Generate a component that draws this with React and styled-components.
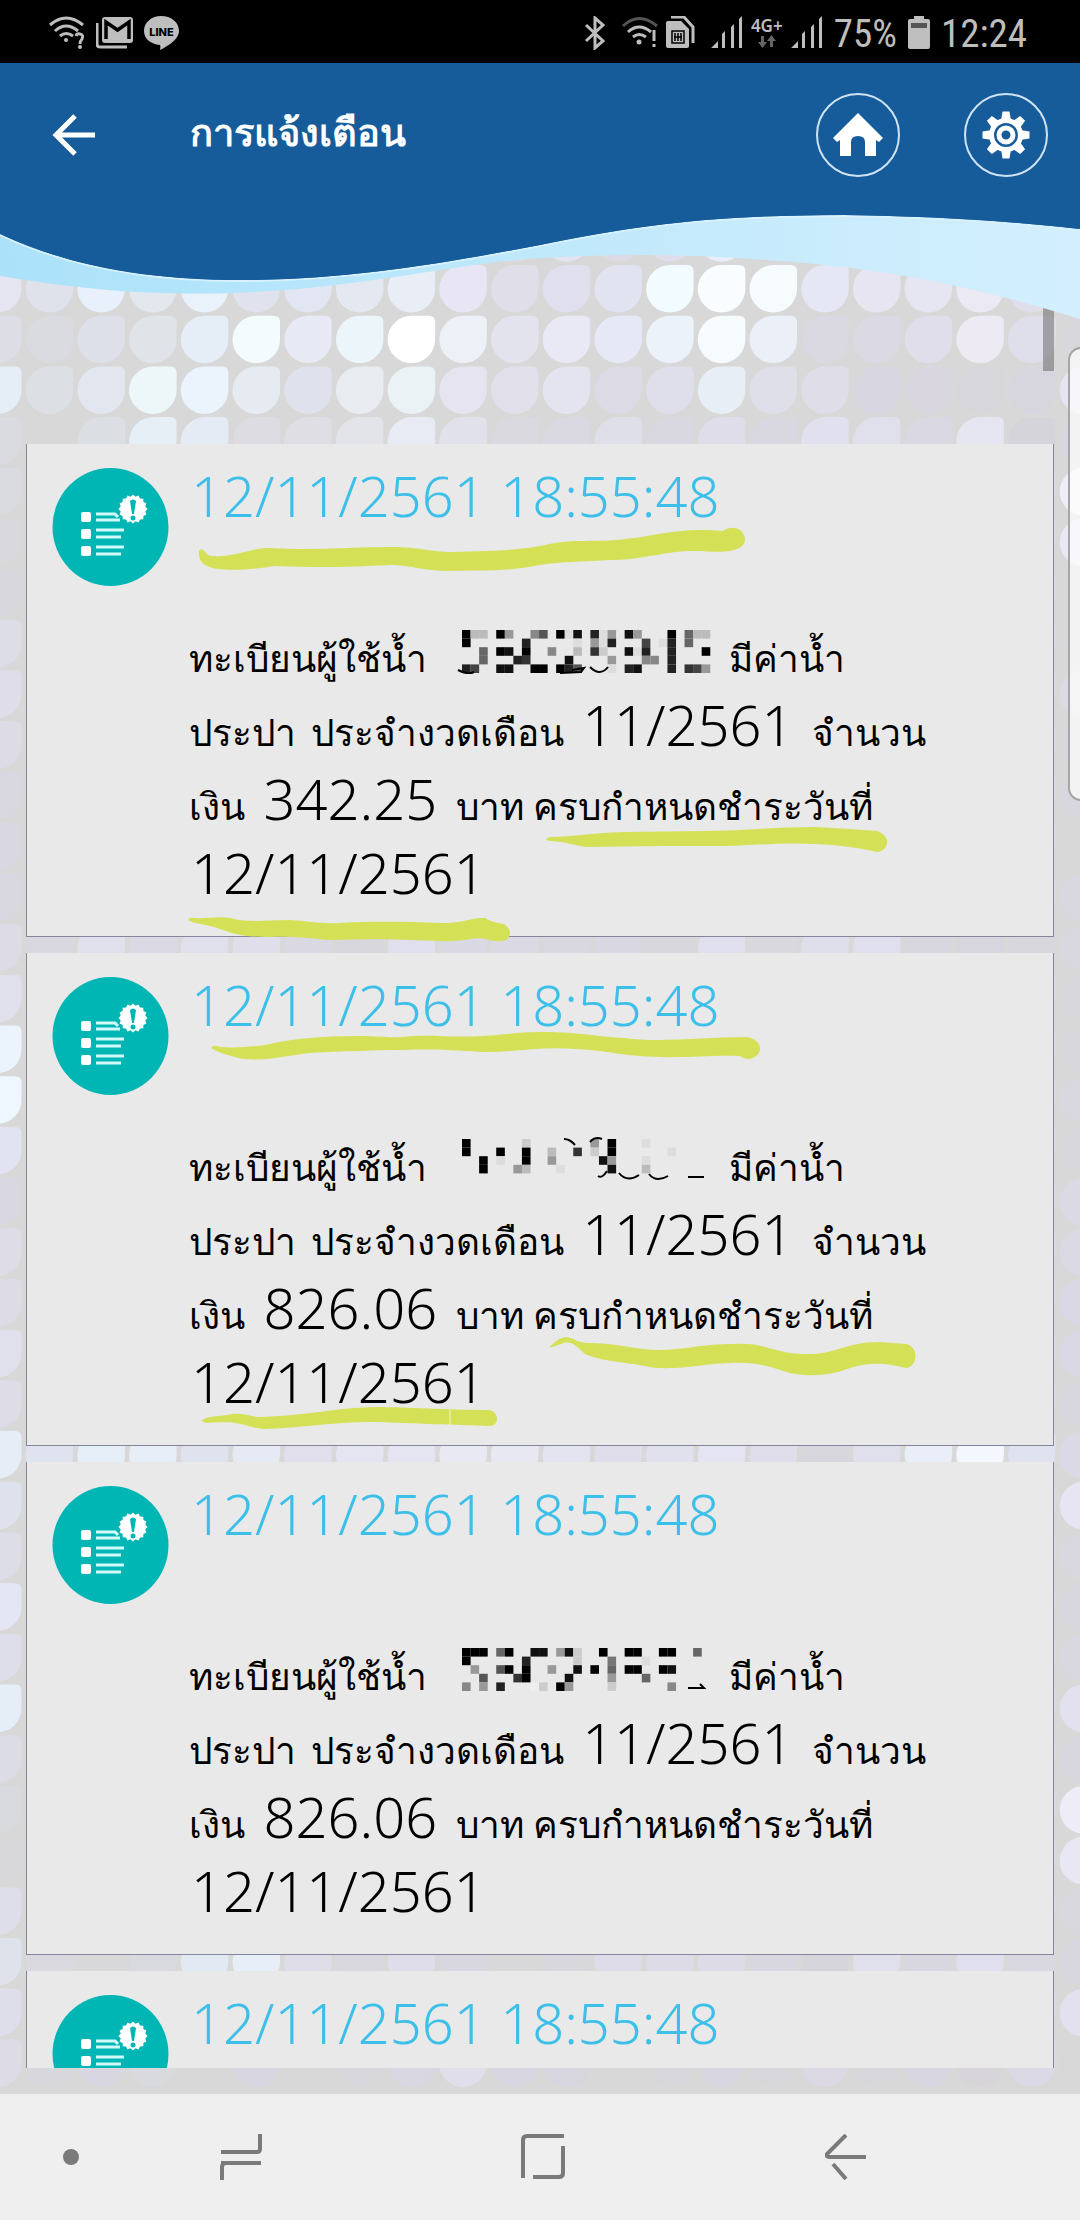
import React from "react";
import styled, { createGlobalStyle } from "styled-components";

const notifications = [
  {
    date: "12/11/2561 18:55:48",
    amount: "342.25",
    top: 444,
    mosaic: [
      "0bb.09..85.0d1.2d9.19...0.6bb",
      "0......2.....d.9d2...4.d2.6..",
      "..6.01.0..8..b.3c..1d2..2...0",
      "..6...23....1....9...88.2....",
      "24..11..00.025...d.21...2.349",
    ],
    strokes: ["M-4 40Q6 45 12 42", "M98 43L119 42L122 38L110 40", "M128 37Q138 47 146 37"],
    marks: [
      "M199 551Q202 547 205 552C208 557 216 557 230 555C245 553 252 548 270 548C310 551 350 547 392 547C420 547 430 552 452 552C500 551 520 550 545 545C575 538 595 543 625 539C655 537 675 527 723 531C733 524 745 529 745 540C744 552 722 553 700 551C665 550 650 559 612 560C570 562 560 562 540 565C505 572 480 570 445 571C420 570 410 565 390 565C350 567 320 568 275 566C250 570 220 572 207 566Q198 562 199 551Z",
      "M546 840Q548 836 556 837C575 836 595 833 624 832L705 831C740 831 775 827 815 827C840 828 860 830 877 831C892 836 889 851 877 852C860 848 840 845 815 844C780 842 750 846 726 846L664 846L587 847C572 845 562 841 550 841Z",
      "M188 920Q189 917 194 918C207 919 218 916 231 918C240 922 262 921 289 920C310 921 320 924 340 923C380 921 410 922 441 923C465 923 473 917 485 918C494 923 499 923 504 924C513 929 511 940 503 941C492 942 485 938 479 938C465 939 460 942 440 941L379 939L327 940C310 938 290 936 270 937C240 937 232 933 217 928C207 924 194 924 188 920Z",
    ],
  },
  {
    date: "12/11/2561 18:55:48",
    amount: "826.06",
    top: 953,
    mosaic: [
      "0......c.......9.0...d.......",
      "0...0..0..b..3.c.0......d....",
      "..0.d..0..9.....19...d.......",
      "..0...9b...d.....1...b.......",
      ".............................",
    ],
    strokes: ["M102 0Q108 0 113 6", "M128 3Q133 -3 140 0", "M136 37Q140 40 145 32", "M157 34Q165 44 177 36", "M187 35Q194 44 206 37", "M226 38H242"],
    marks: [
      "M211 1048Q213 1044 220 1047C235 1048 250 1047 265 1045C290 1039 320 1036 361 1036C380 1036 390 1038 403 1037C430 1034 450 1038 482 1036C510 1034 520 1032 542 1032C580 1032 600 1037 624 1038C660 1043 705 1037 746 1037C764 1039 764 1056 750 1059Q743 1059 740 1056C710 1055 690 1058 660 1057C620 1056 605 1050 575 1049C540 1046 510 1053 481 1052C450 1050 430 1049 403 1050C370 1050 330 1052 310 1053C290 1055 270 1061 244 1059C235 1057 218 1053 211 1048Z",
      "M549 1348C554 1342 559 1338 566 1337C575 1338 576 1343 590 1343C625 1344 635 1350 661 1350C690 1349 700 1344 735 1344C765 1342 775 1354 806 1354C835 1355 845 1342 880 1342L906 1344C919 1346 918 1367 906 1368C885 1363 870 1362 850 1368C830 1376 810 1377 790 1373C770 1367 760 1362 730 1363C700 1364 690 1369 656 1368C625 1362 600 1361 585 1354C576 1346 572 1341 564 1343Z",
      "M201 1421C207 1415 220 1417 232 1414C245 1413 250 1417 262 1417C310 1415 335 1408 375 1407C410 1407 440 1410 489 1410C500 1412 499 1426 490 1426C460 1425 430 1424 375 1422C330 1422 300 1428 265 1429C245 1428 245 1420 207 1423Z",
    ],
    gap: "M450 1410V1426",
  },
  {
    date: "12/11/2561 18:55:48",
    amount: "826.06",
    top: 1462,
    mosaic: [
      "000.60..11.91c..0..00..00..6.",
      "0......2.....c...7...d.......",
      ".9..50.0..9..1.0.6.00..01....",
      "..5...30....1....9...6.......",
      "8.9.2...ec.09....c......8....",
    ],
    strokes: ["M226 40H242L238 36"],
    marks: [],
  },
  {
    date: "12/11/2561 18:55:48",
    top: 1971,
    marks: [],
  },
];

const gray = (c) => `#${c}${c}${c}`;

// one colour per drop, left to right
const dropRows = {
  "-2": "e0e0e8 e0e0e8 e0e0e8 e0e0e8 e0e0e8 e0e0e8 e0e0e8 e0e0e8 e0e0e8 e0e0e8 dddce8 e4e3f1 dddae5 dfdde9 eaeef8 d8d8dd dad9df d8d8dd d8d8dd d8d8dd d8d8dd d8d8dd",
  "-1": "e4e5f1 dfe2ea e7f0fb e2e8ed e9f1fb e0e2ed e2e6f3 e4e8f0 e9edf6 e8e6f4 e0dee9 e0dfed e1e3f1 f2fbff fafdff f6fcfe e5e7f4 e7e5f1 e6e6f2 ebe9f3 e0deea d8d7db",
  0: "dddde6 d9dbe0 dde0e9 e0e3e8 e5edf6 f3fbfe e7eaf4 ecf5f9 ffffff edf0f6 e3e3ee e8e9f4 e6e9f5 ecf2fa f5fbff ebf0f8 dad9e1 dbdae4 dfdeea edeaf4 dfdeeb d8d7db",
  1: "e5edf7 dce0e5 e2e6ee edf7fa ebf3fc e6ebf2 dfe2ec e8ebf0 ebf2f5 e6e4f1 e0dfea e4e4f0 dcdae5 dfdfeb e8eef6 dfdfe9 dfdde8 d8d6e0 d9d6df d6d6db d7d6df e5e5f2",
  2: "d9dbe1 d8d8d8 dbdfe4 e6eef6 e5ebf5 dcdce2 dedee4 e3e4ea e8ebf4 e1e1eb d9d9df dad9e1 dedfe9 d9d8e0 dfddea d9d8e0 e0e0ee e0dfec dad9e3 e6e6f3 d6d4db d8d6e0",
  12: "dddce6 d9d8e0 e0dfec dad9e4 e0dfec dfdeea dad8e2 d7d6dc e0dfee dad9e3 dbdae4 d9d7df d9d8e2 d8d7de e0dfed d9d8df dfdeeb e0dfee d8d7df d7d6df d8d6dd d9d8e1",
  22: "e6edf7 dfe3ef e6eef7 e7eef7 dfe3ee e6eaf4 e1dfeb e5e5f1 e5e5f2 e9e9f4 e8e8f3 e4e4f1 e0deea e1e0ed e4e4f2 dfdeea d7d6dd e0dfec eaeef8 f4f8fe e0e2ef dcd8e6",
  32: "dfe1eb d9d9df d8d8db d9dade e2e9f2 e8eef8 dedde8 d8d8de dfdde9 d8d6df d8d8da d7d7dc dfdce9 dddce6 dcdbe6 d8d7df d7d5dc e0dfec d8d7e0 e0dfee d9d7e0 d8d7df",
  34: "dddbe6 d8d7db d8d6e0 d9dade d8d8d8 d8d7e1 d8d8d9 d8d7dc d9d7e2 e1deeb d8d6e1 d7d5dd d8d8d9 d7d7db d8d6e1 d7d6db dcd9e5 d7d6da d8d6e0 d7d5da dbd9e5 d7d7d9",
};
// outer columns beside the cards, from row 3 down
const leftEdge = "d9dbe0 d8d8dd d8d7de dddde8 dedde9 dcdbe6 d9d8e1 d9d8e2 d9d8e1 d9d8e0 e0e0ec ebf3fd eef6ff e2e3f0 d9d8e2 dddce7 dcdbe6 e0e0ec dddce7 e6edf7 dfe2ed dcdde7 e4e7f3 dddeea e5edf7 dbdce5 d9dade d8d8da dddeea dfe1eb dddeea".split(" ");
const rightEdge = "f0edf8 e8e7f3 d8d8da d8d8da dcdbe5 d8d7dd d8d7df d8d8da d9d8e1 d8d7df d8d7dc d8d7dc d9d8e0 d8d7dc dad9e4 dad9e4 d9d8e4 dad8e4 d8d7df dad8e4 e6e5f3 d9d8e0 d8d7df d9d8e0 e2e1ef d8d7df efecf7 e8e7f4 d9d8df d8d7df e3e1ef".split(" ");

const drops = [];
for (let row = -2; row <= 34; row++) {
  const known = dropRows[row] && dropRows[row].split(" ");
  for (let col = 0; col < 22; col++) {
    let fill = "#d9d9df";
    if (known) fill = `#${known[col]}`;
    else if (col === 0) fill = `#${leftEdge[row - 3]}`;
    else if (col === 21) fill = `#${rightEdge[row - 3]}`;
    drops.push({ x: -26 + col * 51.7, y: 315.7 + row * 50.7, fill });
  }
}

function Backdrop() {
  return (
    <BackdropSvg viewBox="0 0 1080 2094" preserveAspectRatio="xMidYMin slice" aria-hidden="true">
      {drops.map((d, i) => (
        <path
          key={i}
          transform={`translate(${d.x} ${d.y})`}
          d="M24 0H41Q47.500 0 47.500 6V24A23.700 23.500 0 0 1 0 24A24 24 0 0 1 24 0Z"
          fill={d.fill}
        />
      ))}
    </BackdropSvg>
  );
}

function Signal() {
  return (
    <svg width="32" height="33" viewBox="0 0 32 33" fill="#bebebe">
      <path d="M0 32L7 25V32ZM11 18L14 15V32H11ZM20 11L23 8V32H20ZM28 3L31 0V32H28Z" />
    </svg>
  );
}

function StatusIcons() {
  return (
    <StatusGroup>
      <svg width="36" height="34" viewBox="0 0 36 34" fill="none" stroke="#bebebe" strokeWidth="3">
        <path d="M1 9Q17 -5 34 9M6 15Q17 5 29 15M11 20Q17 15 24 20" />
        <circle cx="17" cy="24" r="2" fill="#bebebe" stroke="none" />
        <path d="M27 20Q28 17 31 18Q35 19 33 23Q31 25 31 28" />
        <circle cx="31" cy="31" r="2" fill="#bebebe" stroke="none" />
      </svg>
      <svg width="37" height="34" viewBox="0 0 37 34">
        <path d="M1 7V28Q1 31 4 31H31" fill="none" stroke="#bebebe" strokeWidth="3" />
        <rect x="6" y="1" width="31" height="26" rx="3" fill="#bebebe" />
        <path d="M10 23V6L21.500 14L33 6V23" fill="none" stroke="#000" strokeWidth="3.500" />
      </svg>
      <svg width="35" height="34" viewBox="0 0 35 34">
        <path d="M17 0C8 0 0 6 0 15C0 23 7 28 16 29Q17 31 16 34C22 31 35 24 35 15C35 6 27 0 17 0Z" fill="#bebebe" />
        <text x="17.500" y="20" textAnchor="middle" fontSize="11" fontWeight="800" fontFamily="Inter, sans-serif">LINE</text>
      </svg>
    </StatusGroup>
  );
}

function StatusBar() {
  return (
    <Status>
      <StatusIcons />
      <StatusGroup $tight>
        <IconSlot $after>
          <svg width="22" height="34" viewBox="0 0 22 34" fill="none" stroke="#bebebe" strokeWidth="3">
            <path d="M2 9L19 25L11 32V2L19 9L2 25" />
          </svg>
        </IconSlot>
        <svg width="36" height="34" viewBox="0 0 36 34" fill="none" stroke="#bebebe" strokeWidth="3">
          <path d="M1 10Q17 -5 35 10" stroke="#555" />
          <path d="M6 16Q17 6 29 16M11 21Q17 16 24 21M32 14V25M32 28V31" />
          <circle cx="17" cy="26" r="2.500" fill="#bebebe" stroke="none" />
        </svg>
        <svg width="29" height="33" viewBox="0 0 29 33">
          <path d="M2 5H15L23 13V30Q23 32 21 32H2Q0 32 0 30V7Q0 5 2 5Z" fill="#bebebe" />
          <path d="M5 1H18L27 11V27" fill="none" stroke="#bebebe" strokeWidth="3" />
          <path d="M6 15H18V27H6ZM9 17V25M12 17V25M15 17V25M8 21H16" fill="none" stroke="#000" strokeWidth="1.500" />
        </svg>
        <IconSlot><Signal /></IconSlot>
        <Network>
          4G+
          <svg width="20" height="14" viewBox="0 0 20 14" fill="#666">
            <path d="M4 1H7V7H10L5.500 13L1 7H4ZM13 12H16V6H19L14.500 0L10 6H13Z" />
          </svg>
        </Network>
        <Signal />
        <StatusText>75%</StatusText>
        <svg width="22" height="34" viewBox="0 0 22 34">
          <path d="M6 0H16V3H20Q22 3 22 5V31Q22 33 20 33H2Q0 33 0 31V5Q0 3 2 3H6Z" fill="#bebebe" />
          <rect x="3" y="7" width="16" height="5" fill="#555" />
        </svg>
        <StatusText>12:24</StatusText>
      </StatusGroup>
    </Status>
  );
}

function Header() {
  return (
    <HeaderBar>
      <Wave viewBox="0 63 1080 257" preserveAspectRatio="none" aria-hidden="true">
        <defs>
          <linearGradient id="sky">
            <stop offset="0" stopColor="#abe2fa" />
            <stop offset="1" stopColor="#d3effd" />
          </linearGradient>
        </defs>
        <path d="M0 63V276C60 286 120 293 185 293.500C340 295 450 263 540 258C640 252 720 255 815 264C920 274 1010 297 1080 319V63Z" fill="url(#sky)" />
        <path d="M0 63V235C70 268 150 281 240 281C350 281 450 263 540 246C640 225 720 216 844 216C930 217 1010 222 1080 230V63Z" fill="#175c9a" stroke="#d8f2fd" strokeWidth="2" />
        <path d="M0 63V234C70 267 150 280 240 280C350 280 450 262 540 245C640 224 720 215 844 215C930 216 1010 221 1080 229V63Z" fill="#175c9a" />
      </Wave>
      <Toolbar>
        <IconButton aria-label="Back">
          <svg width="44" height="42" viewBox="0 0 44 42" fill="none" stroke="#fff" strokeWidth="5">
            <path d="M23 2L4 21L23 40M4 21H43" />
          </svg>
        </IconButton>
        <Title>การแจ้งเตือน</Title>
        <Actions>
          <IconButton $round aria-label="Home">
            <svg width="50" height="44" viewBox="0 0 50 44" fill="#fff">
              <path d="M25 0L50 25L46 29L43 27V43H32V29Q32 23 25 23Q18 23 18 29V43H7V27L4 29L0 25Z" />
            </svg>
          </IconButton>
          <IconButton $round aria-label="Settings">
            <svg width="48" height="48" viewBox="-24 -24 48 48" fill="#fff">
              {[0, 45, 90, 135, 180, 225, 270, 315].map((a) => (
                <path key={a} transform={`rotate(${a})`} d="M-3.500 -23.500H3.500L5 -14H-5Z" />
              ))}
              <circle r="14.500" fill="none" stroke="#fff" strokeWidth="5" />
              <circle r="7" fill="none" stroke="#fff" strokeWidth="5" />
            </svg>
          </IconButton>
        </Actions>
      </Toolbar>
    </HeaderBar>
  );
}

const badgePoints = Array.from({ length: 32 }, (_, i) => {
  const r = i % 2 ? 12.5 : 14.5;
  const a = (i * Math.PI) / 16;
  return `${81 + r * Math.cos(a)},${41 + r * Math.sin(a)}`;
}).join(" ");

function BillIcon() {
  return (
    <svg width="117" height="118" viewBox="0 0 117 118" aria-hidden="true">
      <ellipse cx="58.500" cy="59" rx="58" ry="59" fill="#00b6b5" />
      <g fill="#fff">
        <rect x="29" y="44" width="10" height="10" rx="2" />
        <rect x="29" y="61" width="10" height="10" rx="2" />
        <rect x="29" y="78" width="10" height="10" rx="2" />
      </g>
      <path d="M44 46H63L66 49M44 52H68M44 62H72M44 69H69M44 79H72M44 86H69" fill="none" stroke="#d3fafa" strokeWidth="3" />
      <polygon points={badgePoints} fill="#fff" />
      <path d="M78 33Q81 30 84 33L82 46H80Z" fill="#00b6b5" />
      <circle cx="81" cy="50" r="2.500" fill="#00b6b5" />
    </svg>
  );
}

function Mosaic({ cells, strokes }) {
  return (
    <MosaicSvg width="249" height="44" viewBox="0 0 249 44" role="img" aria-label="hidden">
      {cells.map((line, y) =>
        line.split("").map((c, x) =>
          c === "." ? null : <rect key={`${x}-${y}`} x={x * 8.56} y={y * 8.6} width="8.600" height="8.600" fill={gray(c)} />
        )
      )}
      <path d={strokes.join("")} fill="none" stroke="#000" strokeWidth="2" />
    </MosaicSvg>
  );
}

function Notification({ item }) {
  return (
    <Card>
      <BillIcon />
      <Content>
        <DateText>{item.date}</DateText>
        {item.amount && (
          <Message>
            <Line>
              <Thai>ทะเบียนผู้ใช้น้ำ</Thai> <Mosaic cells={item.mosaic} strokes={item.strokes} /> <Thai>มีค่าน้ำ</Thai>
            </Line>
            <Line>
              <Thai>ประปา</Thai> <Thai>ประจำงวดเดือน</Thai> <Digits>11/2561</Digits> <Thai>จำนวน</Thai>
            </Line>
            <Line>
              <Thai>เงิน</Thai> <Digits>{item.amount}</Digits> <Thai>บาท ครบกำหนดชำระวันที่</Thai>
            </Line>
            <Line>
              <Digits $first>12/11/2561</Digits>
            </Line>
          </Message>
        )}
      </Content>
      {item.marks.length > 0 && (
        <Marker viewBox={`26 ${item.top} 1028 493`} aria-hidden="true">
          <path d={item.marks.join("")} fill="#d4e157" />
          {item.gap && <path d={item.gap} stroke="#f4f7d0" />}
        </Marker>
      )}
    </Card>
  );
}

export default function App() {
  return (
    <Screen>
      <GlobalStyle />
      <StatusBar />
      <Backdrop />
      <Header />
      <Main>
        <ScrollThumb />
        <List>
          {notifications.map((item) => (
            <Notification key={item.top} item={item} />
          ))}
        </List>
      </Main>
      <EdgeHandle />
      <NavBar>
        <Dot />
        <NavButton aria-label="Recents">
          <svg width="42" height="48" viewBox="0 0 42 48">
            <path d="M40 1V16Q40 19 37 19H1M1 30H41M2 47V34Q2 30 6 30" />
          </svg>
        </NavButton>
        <NavButton aria-label="Home">
          <svg width="44" height="46" viewBox="0 0 44 46">
            <path d="M2 44V6Q2 2 6 2H43M42 12V39Q42 43 38 43H12" />
          </svg>
        </NavButton>
        <NavButton aria-label="Back">
          <svg width="42" height="46" viewBox="0 0 42 46">
            <path d="M21 1L2 20Q1 23 4 23H41M8 30L21 45" />
          </svg>
        </NavButton>
      </NavBar>
    </Screen>
  );
}

const GlobalStyle = createGlobalStyle`
  * { box-sizing: border-box; }
  body { margin: 0; }
  svg { display: block; flex-shrink: 0; }
`;

const Screen = styled.div`
  position: relative;
  display: flex;
  flex-direction: column;
  height: 100vh;
  overflow: hidden;
  background: #d8d8d8;
  font-family: "Noto Sans", "Open Sans", sans-serif;
`;

const BackdropSvg = styled.svg`
  position: absolute;
  top: 0;
  left: 0;
  width: 100%;
`;

const Status = styled.div`
  position: relative;
  z-index: 2;
  display: flex;
  justify-content: space-between;
  align-items: center;
  height: 63px;
  padding: 2px 50px 0 49px;
  background: #000;
  color: #bebebe;
`;

const StatusGroup = styled.div`
  display: flex;
  align-items: center;
  gap: ${(p) => (p.$tight ? "8px" : "11px")};
`;

const StatusText = styled.span`
  padding: 2px 3px 0;
  font-family: "Roboto Condensed", "Liberation Sans Narrow", Roboto, sans-serif;
  font-size: 39px;
  line-height: 40px;
`;

const IconSlot = styled.div`
  padding: ${(p) => (p.$after ? "0 8px 0 0" : "0 0 0 8px")};
`;

const Network = styled.div`
  display: flex;
  flex-direction: column;
  align-items: center;
  font-size: 17px;
  font-weight: 600;
  line-height: 18px;
`;

const HeaderBar = styled.header`
  position: relative;
  z-index: 1;
  height: 244px;
`;

const Wave = styled.svg`
  position: absolute;
  top: 0;
  left: 0;
  width: 100%;
  height: 257px;
`;

const Toolbar = styled.div`
  position: relative;
  display: grid;
  grid-template-columns: 138px 1fr auto;
  align-items: center;
  padding: 30px 32px 0 52px;
`;

const Actions = styled.div`
  display: flex;
  gap: 64px;
`;

const IconButton = styled.button`
  display: flex;
  align-items: center;
  justify-content: ${(p) => (p.$round ? "center" : "flex-start")};
  width: 84px;
  height: 84px;
  padding: 0;
  background: none;
  border: ${(p) => (p.$round ? "2px solid #cfe3f5" : "0")};
  border-radius: 50%;
`;

const Title = styled.h1`
  margin: 0;
  padding-bottom: 8px;
  color: #fff;
  font-size: 38px;
  font-weight: 700;
  line-height: 60px;
`;

const Main = styled.main`
  position: relative;
  flex: 1;
  min-height: 0;
  margin-bottom: 26px;
  padding: 137px 26px 0;
  overflow: hidden;
`;

const ScrollThumb = styled.div`
  position: absolute;
  top: 0;
  right: 26px;
  width: 11px;
  height: 64px;
  background: rgba(96, 96, 96, 0.5);
`;

const List = styled.ul`
  display: flex;
  flex-direction: column;
  gap: 16px;
  margin: 0;
  padding: 0;
  list-style: none;
`;

const Card = styled.li`
  position: relative;
  display: flex;
  align-items: flex-start;
  gap: 20px;
  height: 493px;
  padding: 24px 0 0 25px;
  background: #e9e9e9;
  border: 1px solid #85859c;
  border-top: 0;
`;

const Content = styled.div`
  flex: 1;
  font-size: 56px;
  font-weight: 300;
`;

const DateText = styled.time`
  display: block;
  padding-left: 2px;
  color: #3cbfe8;
  line-height: 54px;
`;

const Message = styled.div`
  padding-top: 91px;
  color: #000;
`;

const Line = styled.div`
  height: 74px;
  line-height: 74px;
  white-space: nowrap;
`;

const Thai = styled.span`
  font-size: 37px;
  line-height: 1;
`;

const Digits = styled.span`
  padding: ${(p) => (p.$first ? "0 0 0 2px" : "0 4px")};
`;

const MosaicSvg = styled.svg`
  display: inline-block;
  margin: 0 4px 0 20px;
  vertical-align: -2px;
  overflow: visible;
`;

const Marker = styled.svg`
  position: absolute;
  top: 0;
  left: -1px;
  width: 1028px;
  height: 493px;
  overflow: visible;
`;

const EdgeHandle = styled.div`
  position: absolute;
  top: 347px;
  right: -14px;
  width: 26px;
  height: 454px;
  background: rgba(255, 255, 255, 0.7);
  border: 2px solid #a5a5a5;
  border-radius: 14px;
`;

const NavBar = styled.nav`
  position: relative;
  display: grid;
  grid-template-columns: 142fr 198fr 406fr 200fr 134fr;
  align-items: center;
  height: 126px;
  background: #efefef;
`;

const Dot = styled.div`
  justify-self: center;
  width: 16px;
  height: 16px;
  border-radius: 50%;
  background: #7a7a7a;
`;

const NavButton = styled.button`
  display: flex;
  justify-content: center;
  padding: 0;
  background: none;
  border: 0;
  svg {
    fill: none;
    stroke: #7a7a7a;
    stroke-width: 4;
  }
`;
